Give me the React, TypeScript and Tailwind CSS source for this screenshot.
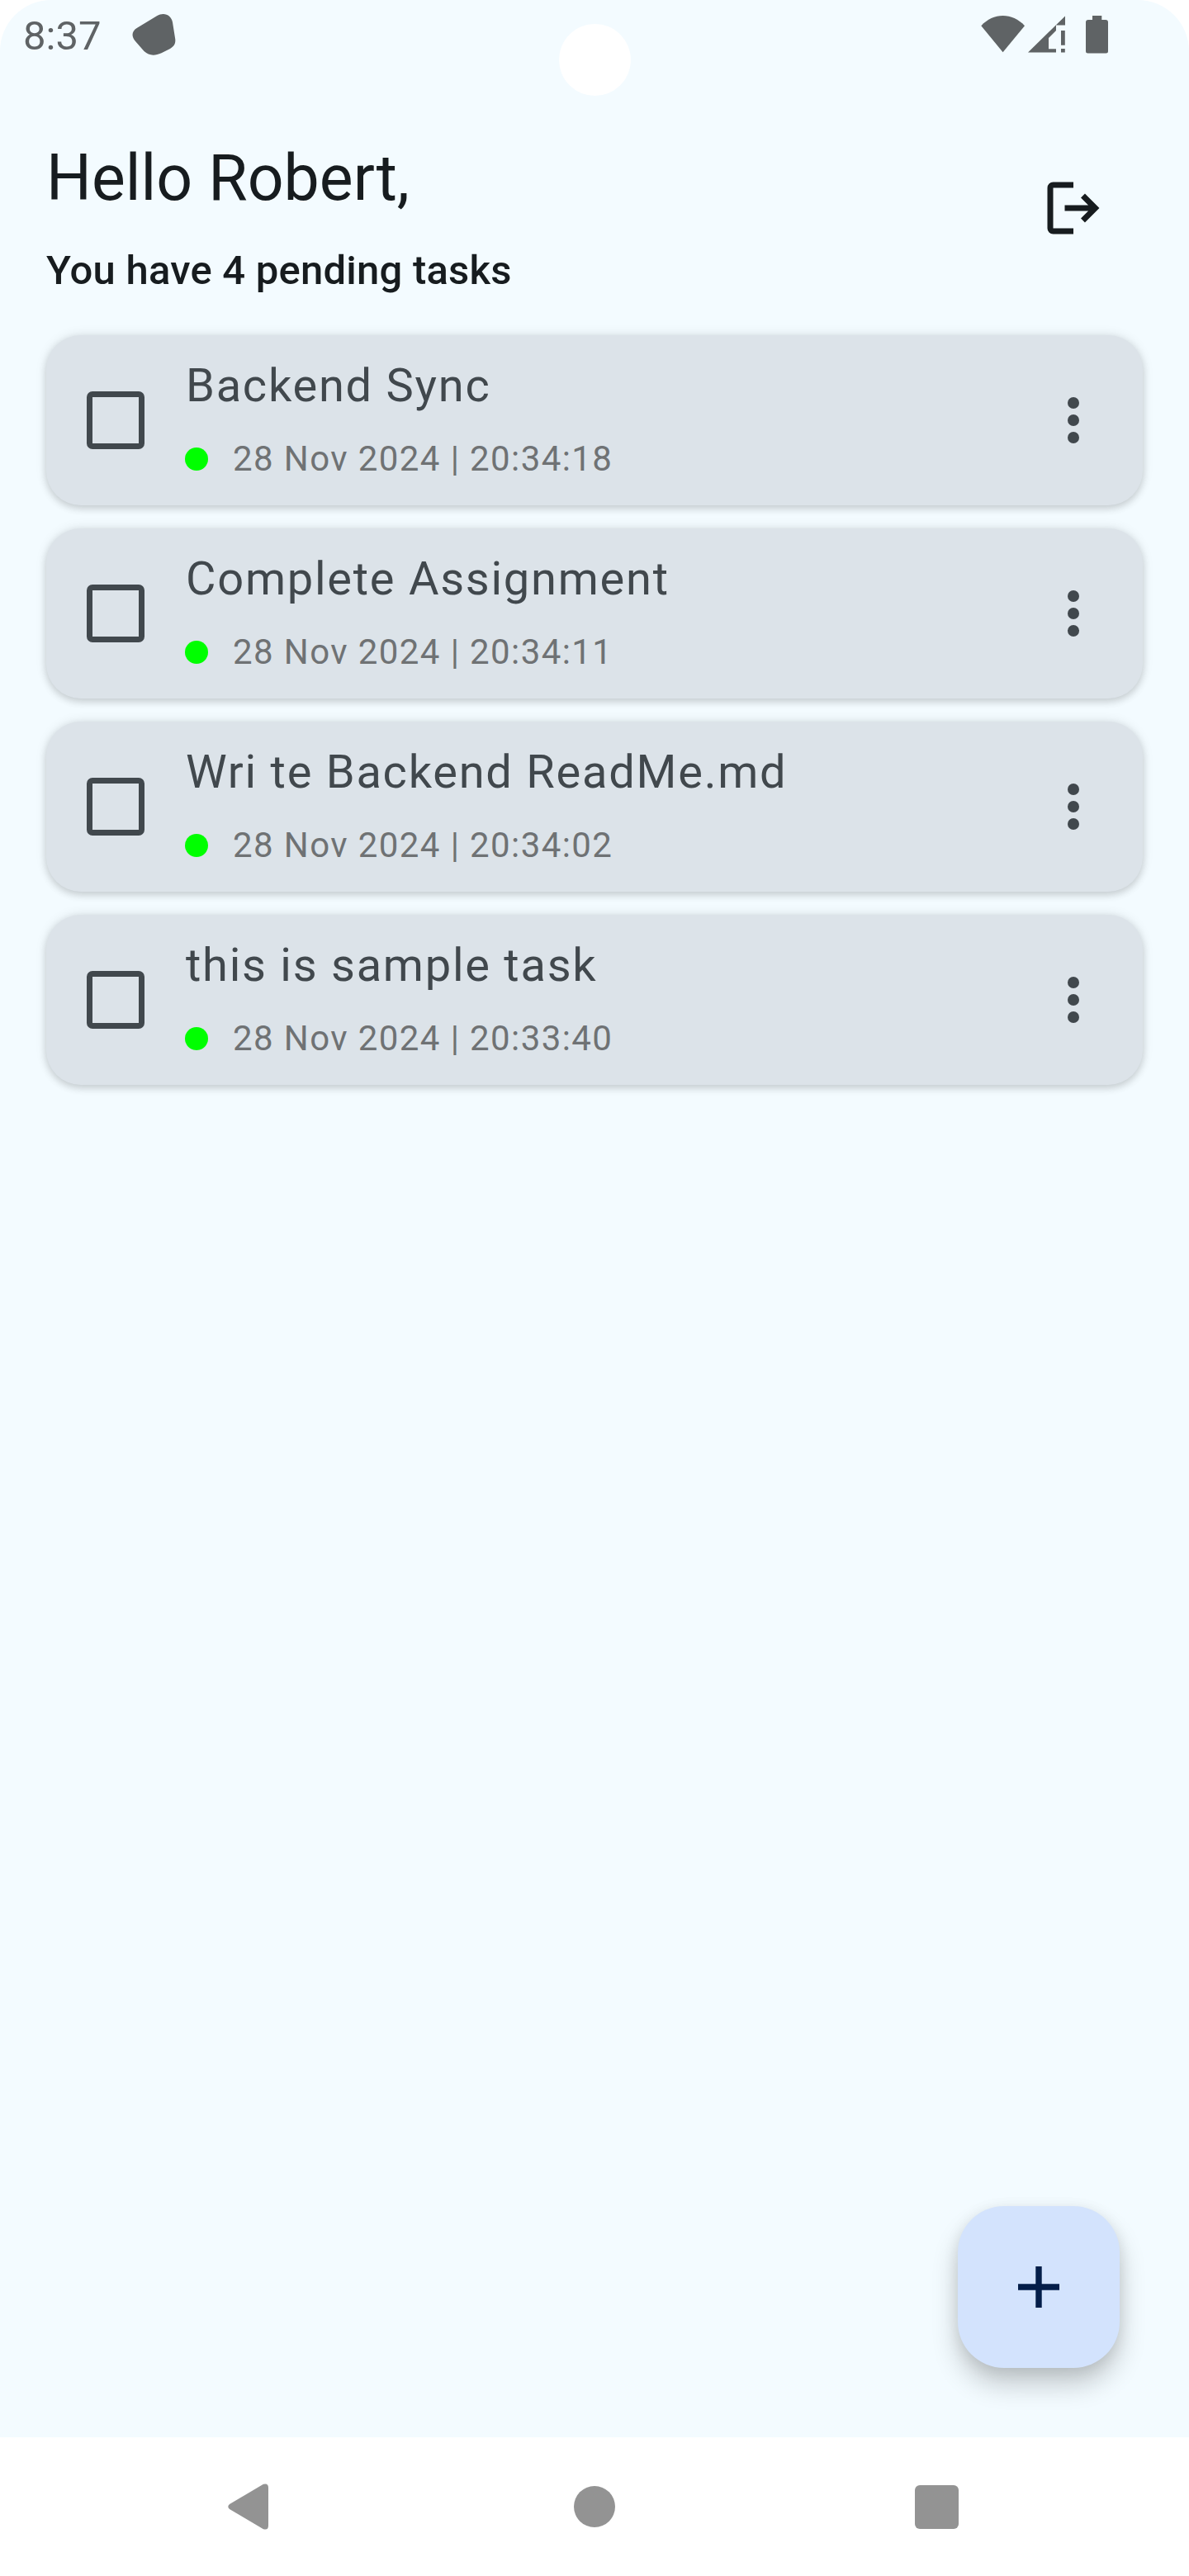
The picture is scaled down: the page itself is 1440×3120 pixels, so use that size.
const tasks = [
  { title: "Backend Sync", date: "28 Nov 2024 | 20:34:18" },
  { title: "Complete Assignment", date: "28 Nov 2024 | 20:34:11" },
  { title: "Wri te Backend ReadMe.md", date: "28 Nov 2024 | 20:34:02" },
  { title: "this is sample task", date: "28 Nov 2024 | 20:33:40" },
];

function StatusBar() {
  return (
    <header className="flex h-[84px] items-start justify-between pl-[28px] pr-[98px] text-[#5f6365]">
      <div className="flex">
        <span className="mt-[15px] text-[49px] leading-[57px]">8:37</span>
        <svg className="ml-[38px] mt-[16px]" width="54" height="52" viewBox="0 0 54 52" fill="currentColor">
          <path d="M6.500 17.500L30 3.200C39 -2 47.500 2.500 49 11L52.200 31C53 37 50.500 40.500 46 43L35.500 48.200C27 52 20.500 51.500 14.500 46L4 34C-1 28.500 -1 21.500 6.500 17.500Z" />
        </svg>
      </div>
      <svg className="mt-[19px]" width="154" height="46" viewBox="0 0 154 46" fill="currentColor">
        <path d="M0.300 12.300C15 -4 38 -4 53 12.300L26.600 44.300Z" />
        <path fillRule="evenodd" d="M57 44.500L102 0.500V11.500H91V18L82 27V40.300H91V44.500Z" />
        <path d="M97 18h4.800v17.700h-4.800zM97 40h4.800v4.500h-4.800z" />
        <path d="M135 0h11.300v5h4.700a3 3 0 0 1 3 3v35a2.500 2.500 0 0 1-2.500 2.500h-22a2.500 2.500 0 0 1-2.500-2.500V8a3 3 0 0 1 3-3h5z" />
      </svg>
    </header>
  );
}

function TaskCard({ title, date }: { title: string; date: string }) {
  return (
    <li className="flex h-[206px] items-center rounded-[42px] bg-[#dce3e9] pl-[49px] pr-[77px] text-[#41484d] shadow-[0_4px_10px_rgba(0,0,0,0.14),0_0_14px_rgba(0,0,0,0.1)]">
      <span className="size-[70px] rounded-[7px] border-[7px] border-[#41484d]" />
      <div className="ml-[49px] flex-1">
        <p className="pl-px text-[56px] leading-[66px] tracking-[1.75px]">{title}</p>
        <div className="mt-[28px] flex items-center">
          <span className="size-[28px] rounded-full bg-[#00ff00]" />
          <span className="ml-[30px] text-[42px] leading-[56px] tracking-[1.4px] text-[#6f7274]">{date}</span>
        </div>
      </div>
      <div className="flex flex-col gap-[7px]">
        <span className="size-[14px] rounded-full bg-[#41484d]" />
        <span className="size-[14px] rounded-full bg-[#41484d]" />
        <span className="size-[14px] rounded-full bg-[#41484d]" />
      </div>
    </li>
  );
}

export default function App() {
  return (
    <div className="h-[3120px] w-[1440px] bg-white font-[Roboto,sans-serif]">
      <div className="relative flex h-[2952px] flex-col overflow-hidden rounded-t-[62px] bg-[#f3fbff]">
        <StatusBar />
        <div className="absolute left-[677px] top-[29px] size-[87px] rounded-full bg-white" />
        <div className="flex h-[322px] justify-between pl-[56px] pr-[108px] text-[#171c1f]">
          <div className="pt-[83px]">
            <h1 className="text-[77px] leading-[98px]">Hello Robert,</h1>
            <p className="mt-[28px] text-[49px] font-medium leading-[70px] tracking-[0.22px]">You have 4 pending tasks</p>
          </div>
          <svg className="mt-[136px]" width="64" height="64" viewBox="0 0 64 64" fill="none" stroke="currentColor" strokeWidth="7">
            <path d="M32 4H7.500A3.500 3.500 0 0 0 4 7.500V56.500A3.500 3.500 0 0 0 7.500 60H32M21.500 32H58M43.500 17L58.500 32L43.500 47" />
          </svg>
        </div>
        <ul className="flex flex-col gap-[28px] px-[56px]">
          {tasks.map((task) => (
            <TaskCard key={task.title} title={task.title} date={task.date} />
          ))}
        </ul>
        <button className="mb-[84px] mr-[84px] mt-auto flex size-[196px] items-center justify-center self-end rounded-[56px] bg-[#d3e3fd] text-[#041e49] shadow-[0_20px_32px_rgba(0,0,0,0.2),0_4px_18px_rgba(0,0,0,0.09)]">
          <svg width="50" height="50" viewBox="0 0 50 50" fill="none" stroke="currentColor" strokeWidth="7.400">
            <path d="M25 0V50M0 25H50" />
          </svg>
        </button>
      </div>
      <nav className="flex h-[168px] items-center pl-[276px] text-[#939393]">
        <svg width="49" height="56" viewBox="0 0 49 56" fill="currentColor">
          <path d="M2 25L43 0.800Q49 -1 49 5V51Q49 57 43 55.200L2 31Q-1.500 28 2 25Z" />
        </svg>
        <span className="ml-[370px] size-[50px] rounded-full bg-[#939393]" />
        <span className="ml-[363px] size-[53px] rounded-[6px] bg-[#939393]" />
      </nav>
    </div>
  );
}
